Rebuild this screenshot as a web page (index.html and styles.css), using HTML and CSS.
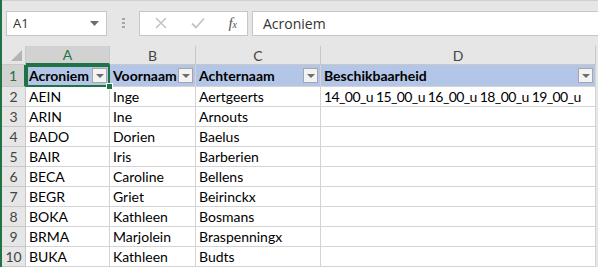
FILE: index.html
```html
<!DOCTYPE html>
<html lang="nl">
  <head>
    <meta charset="UTF-8" />
    <title>Beschikbaarheid</title>
    <link rel="stylesheet" href="styles.css">
  </head>
  <body>
    <div class="app">
      <div class="toolbar">
        <div class="name-box">
          <span>A1</span>
          <svg width="9" height="5" viewBox="0 0 9 5"><path d="M0 0h9L4.5 5z" fill="#6d6d6d"/></svg>
        </div>
        <svg class="grip" width="3" height="11" viewBox="0 0 3 11">
          <rect x="0" y="0" width="3" height="2" fill="#a6a6a6"/>
          <rect x="0" y="4" width="3" height="2" fill="#a6a6a6"/>
          <rect x="0" y="8" width="3" height="2" fill="#a6a6a6"/>
        </svg>
        <div class="fx-buttons">
          <svg width="12" height="12" viewBox="0 0 12 12"><path d="M1 1l10 10M11 1L1 11" stroke="#c4c4c4" stroke-width="1.6"/></svg>
          <svg width="14" height="12" viewBox="0 0 14 12"><path d="M1 6.5l4 4L13 1.5" stroke="#c4c4c4" stroke-width="1.8" fill="none"/></svg>
          <span class="fx">f<sub>x</sub></span>
        </div>
        <div class="formula">Acroniem</div>
      </div>

      <div class="sheet">
        <div class="corner"></div>
        <div class="col-head active">A</div>
        <div class="col-head">B</div>
        <div class="col-head">C</div>
        <div class="col-head">D</div>

        <div class="row-head active">1</div>
        <div class="cell th selected">Acroniem<span class="filter"></span></div>
        <div class="cell th">Voornaam<span class="filter"></span></div>
        <div class="cell th">Achternaam<span class="filter"></span></div>
        <div class="cell th">Beschikbaarheid<span class="filter"></span></div>

        <div class="row-head">2</div>
        <div class="cell">AEIN</div>
        <div class="cell">Inge</div>
        <div class="cell">Aertgeerts</div>
        <div class="cell times">14_00_u 15_00_u 16_00_u 18_00_u 19_00_u</div>

        <div class="row-head">3</div>
        <div class="cell">ARIN</div>
        <div class="cell">Ine</div>
        <div class="cell">Arnouts</div>
        <div class="cell"></div>

        <div class="row-head">4</div>
        <div class="cell">BADO</div>
        <div class="cell">Dorien</div>
        <div class="cell">Baelus</div>
        <div class="cell"></div>

        <div class="row-head">5</div>
        <div class="cell">BAIR</div>
        <div class="cell">Iris</div>
        <div class="cell">Barberien</div>
        <div class="cell"></div>

        <div class="row-head">6</div>
        <div class="cell">BECA</div>
        <div class="cell">Caroline</div>
        <div class="cell">Bellens</div>
        <div class="cell"></div>

        <div class="row-head">7</div>
        <div class="cell">BEGR</div>
        <div class="cell">Griet</div>
        <div class="cell">Beirinckx</div>
        <div class="cell"></div>

        <div class="row-head">8</div>
        <div class="cell">BOKA</div>
        <div class="cell">Kathleen</div>
        <div class="cell">Bosmans</div>
        <div class="cell"></div>

        <div class="row-head">9</div>
        <div class="cell">BRMA</div>
        <div class="cell">Marjolein</div>
        <div class="cell">Braspenningx</div>
        <div class="cell"></div>

        <div class="row-head">10</div>
        <div class="cell">BUKA</div>
        <div class="cell">Kathleen</div>
        <div class="cell">Budts</div>
        <div class="cell"></div>
      </div>
    </div>
  </body>
</html>
```

FILE: styles.css
```css
body {
  margin: 0;
  background-color: #e6e6e6;
  font-family: Lato, "Liberation Sans", sans-serif;
  overflow: hidden;
}
.app {
  border-left: 2px solid #217346;
  height: 267px;
  box-sizing: border-box;
}
.toolbar {
  display: flex;
  align-items: center;
  height: 46px;
  padding: 9px 0 10px 4px;
  box-sizing: border-box;
  border-top: 1px solid #d0d0d0;
}
.name-box {
  width: 101px;
  height: 25px;
  box-sizing: border-box;
  border: 1px solid #c6c6c6;
  background-color: #fff;
  display: flex;
  align-items: center;
  justify-content: space-between;
  padding: 0 7px 0 6px;
  font-family: "Open Sans", sans-serif;
  font-size: 13px;
  color: #333;
}
.grip {
  margin: 0 14px 0 15px;
}
.fx-buttons {
  width: 109px;
  height: 25px;
  box-sizing: border-box;
  border: 1px solid #c6c6c6;
  background-color: #fff;
  display: flex;
  align-items: center;
  justify-content: space-between;
  padding: 0 10px 0 15px;
}
.fx {
  font-family: "Liberation Serif", serif;
  font-style: italic;
  font-size: 15px;
  color: #555;
  line-height: 1;
}
.fx sub {
  font-size: 10px;
  vertical-align: 0;
}
.formula {
  flex: 1;
  margin-left: 4px;
  height: 25px;
  box-sizing: border-box;
  border: 1px solid #c6c6c6;
  border-right: none;
  background-color: #fff;
  padding-left: 10px;
  display: flex;
  align-items: center;
  font-family: "Open Sans", sans-serif;
  font-size: 14px;
  color: #333;
}
.sheet {
  display: grid;
  grid-template-columns: 24px 84px 86px 125px 275px;
  grid-template-rows: 19px 22px repeat(9, 20px);
  font-size: 14px;
  color: #000;
}
.corner,
.col-head,
.row-head {
  background-color: #e6e6e6;
  color: #444;
  box-sizing: border-box;
  border-right: 1px solid #c8c8c8;
  border-bottom: 1px solid #c8c8c8;
  display: flex;
  align-items: center;
  justify-content: center;
  font-size: 14px;
}
.corner {
  position: relative;
}
.corner::after {
  content: "";
  position: absolute;
  right: 3px;
  bottom: 3px;
  border-left: 11px solid transparent;
  border-bottom: 11px solid #b4b4b4;
}
.col-head.active {
  background-color: #d2d2d2;
  color: #217346;
  border-bottom: 2px solid #217346;
}
.row-head.active {
  background-color: #d2d2d2;
  color: #217346;
  border-right: 2px solid #217346;
}
.cell {
  background-color: #fff;
  box-sizing: border-box;
  border-right: 1px solid #d4d4d4;
  border-bottom: 1px solid #d4d4d4;
  padding: 0 3px;
  display: flex;
  align-items: center;
  white-space: nowrap;
  overflow: hidden;
}
.cell.times {
  letter-spacing: -0.6px;
}
.cell.th {
  background-color: #b4c6e7;
  font-weight: bold;
  justify-content: space-between;
  padding-right: 2px;
}
.cell.selected {
  position: relative;
  overflow: visible;
  outline: 2px solid #217346;
  outline-offset: -2px;
}
.cell.selected::after {
  content: "";
  position: absolute;
  right: -4px;
  bottom: -4px;
  width: 5px;
  height: 5px;
  background-color: #217346;
  border: 1px solid #fff;
}
.filter {
  width: 15px;
  height: 15px;
  box-sizing: border-box;
  border: 1px solid #a6a6a6;
  background-color: #f3f3f3;
  position: relative;
  flex: none;
}
.filter::after {
  content: "";
  position: absolute;
  left: 3px;
  top: 5px;
  border-left: 4px solid transparent;
  border-right: 4px solid transparent;
  border-top: 4px solid #6d6d6d;
}
```
